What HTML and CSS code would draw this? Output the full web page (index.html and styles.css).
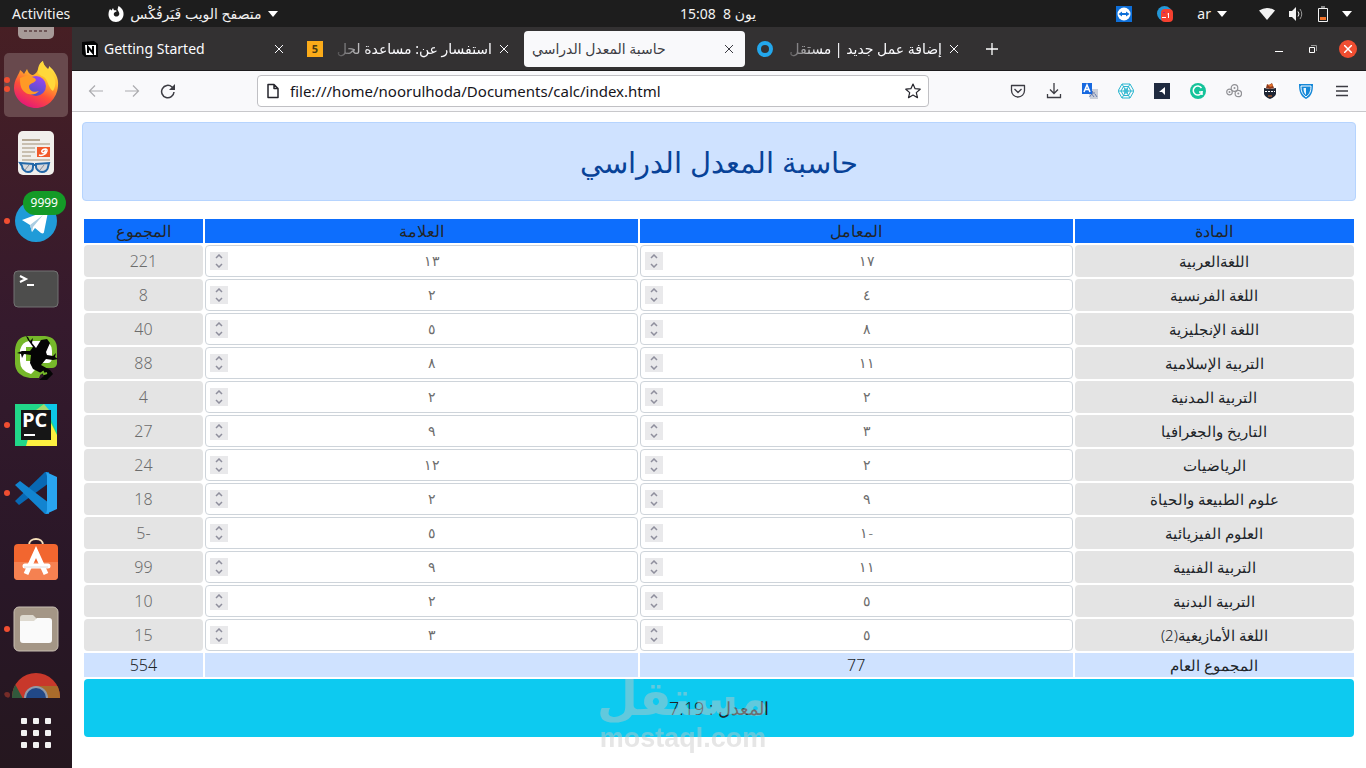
FILE: index.html
```html
<!DOCTYPE html>
<html lang="ar">
<head>
    <meta charset="UTF-8">
    <meta name="viewport" content="width=device-width, initial-scale=1.0">
    <title>حاسبة المعدل الدراسي</title>
    <link rel="stylesheet" href="styles.css">
</head>
<body>
    <!-- Top bar -->
    <header class="topbar">
        <div class="topbar-side">
            <button type="button" class="top-btn">Activities</button>
            <button type="button" class="top-btn app-menu">
                <svg width="16" height="16" viewBox="0 0 16 16"><path fill="#fff" fill-rule="evenodd" d="M2 3l1.500 1.500L5 2l1 2.300C8 4 9 5 9 5L6.500 6.500C5 8 6 10.500 8.200 10.500c2.500 0 3.700-2 2.800-4L9.500 3.500 10.500 0C14 2 16 5 15.500 9 15 13 12 16 8 16 3.500 16 .5 12.500.5 8.500.5 6.500 1 4.500 2 3z"/></svg>
                <span dir="rtl">متصفح الويب فَيَرفُكْس</span>
                <svg width="10" height="6" viewBox="0 0 10 6"><path fill="#fff" d="M0 0h10L5 6z"/></svg>
            </button>
        </div>
        <button type="button" class="top-btn clock" dir="ltr">15:08 &nbsp;8 يون</button>
        <div class="topbar-side tray">
            <svg width="16" height="16" viewBox="0 0 16 16"><path fill="#0e6fd8" d="M0 0h16v16H0z"/><circle cx="8" cy="8" r="6.500" fill="#fff"/><path fill="#0e6fd8" d="M2.500 8L6 5.500V7h4V5.500L13.500 8 10 10.500V9H6v1.500z"/></svg>
            <svg class="tray-telegram" width="16" height="16" viewBox="0 0 16 16"><circle cx="7.500" cy="7.500" r="7.500" fill="#2497d6"/><rect x="4" y="3" width="12" height="13" rx="4" fill="#f4402f"/><path stroke="#fff" d="M5 11.500h4M11.500 7v5M10.500 8h1"/><path fill="#b0208a" d="M6 6h2v1H6z"/></svg>
            <button type="button" class="top-btn lang">ar
                <svg width="10" height="6" viewBox="0 0 10 6"><path fill="#fff" d="M0 0h10L5 6z"/></svg>
            </button>
            <div class="status">
                <svg width="16" height="16" viewBox="0 0 16 16"><path fill="#f2f2f2" d="M0 4.500Q8-.5 16 4.500L8 14z"/></svg>
                <svg width="16" height="16" viewBox="0 0 16 16"><path fill="#f2f2f2" d="M1 5h3l4-4v14l-4-4H1z"/><path fill="none" stroke="#f2f2f2" d="M10 5.500q2 2.500 0 5"/><path fill="none" stroke="#999" d="M12 3q3.500 5 0 10"/></svg>
                <svg width="12" height="16" viewBox="0 0 12 16"><path fill="none" stroke="#f2f2f2" d="M1.500 2.500h9v13h-9zM4 1h4"/><path fill="#f37329" d="M3 11h6v3H3z"/></svg>
                <svg width="10" height="6" viewBox="0 0 10 6"><path fill="#fff" d="M0 0h10L5 6z"/></svg>
            </div>
        </div>
    </header>

    <div class="desktop">
        <!-- Dock -->
        <nav class="dock">
            <div class="dock-list">
                <div class="dock-item cut-top">
                    <svg width="44" height="44" viewBox="0 0 44 44"><rect x="4" y="1" width="36" height="42" rx="5" fill="#a79a98"/><path stroke="#6d5556" stroke-width="2" stroke-dasharray="3 2" d="M10 35h25"/></svg>
                </div>
                <div class="dock-item active running two">
                    <svg width="48" height="48" viewBox="0 0 48 48">
                        <defs>
                            <linearGradient id="fox" x1=".8" y1="0" x2=".3" y2="1"><stop offset="0" stop-color="#fff44f"/><stop offset=".35" stop-color="#ffb52a"/><stop offset=".65" stop-color="#ff5038"/><stop offset="1" stop-color="#e3157b"/></linearGradient>
                            <linearGradient id="globe" x1=".7" y1="0" x2=".3" y2="1"><stop offset="0" stop-color="#9e45f0"/><stop offset="1" stop-color="#4552c4"/></linearGradient>
                        </defs>
                        <path fill="url(#fox)" d="M5 16c1-3 3-5 3-7 2 1 3 3 4 4l3-5c1 3 2 5 5 6 2 0 5-2 6-6 1-5 3-7 5-8 0 3 2 5 5 8 1-1 1-2 1-3 6 5 10 12 9 20-1 13-11 22-22 22S2 38 2 27c0-4 1-8 3-11z"/>
                        <path fill="#ffd83a" d="M26 12c0-6 3-10 5-12 0 4 3 7 7 10 6 7 7 13 3 20-4-2-5-10-8-13-2-2-5-2-7-5z"/>
                        <circle cx="24" cy="25" r="10" fill="url(#globe)"/>
                        <path fill="#ff9a26" d="M8 17l8-3c3 2 7 2 8 5-1 3-6 3-7 6 0 5 5 7 10 5-5 6-15 4-18-4-1-3-1-6-1-9z"/>
                    </svg>
                </div>
                <div class="dock-item">
                    <svg width="48" height="48" viewBox="0 0 48 48"><rect x="6" y="2" width="36" height="44" rx="5" fill="#f1efec"/><path stroke="#b5a894" stroke-width="2" d="M10 11h18"/><path stroke="#c9bfb0" stroke-width="2" d="M10 15h28M10 19h13M10 23h13M10 27h9M10 31h28"/><rect x="25" y="18" width="13" height="10" fill="#f1592a"/><path fill="none" stroke="#fff" stroke-width="1.500" d="M27 26c2 1 7 0 8-4s-7-1-5 1 4-1 3-2"/><g fill="#d6d8dc" stroke="#2468a8" stroke-width="2"><path d="M8 34l13 1v3c0 3-2 5-5 5s-6-3-6-6zM24 35l13-1-1 4c0 3-3 5-6 5s-6-3-6-5z"/></g><path fill="none" stroke="#2468a8" stroke-width="2" d="M21 36h3"/><path stroke="#8b8f98" d="M13 41l4-5M28 41l4-5"/></svg>
                </div>
                <div class="dock-item running">
                    <svg width="48" height="48" viewBox="0 0 48 48"><circle cx="24" cy="24" r="21" fill="#209bd8"/><path fill="#fff" d="M10 23l24-9c2-1 2 0 2 1l-4 20c0 1-1 2-3 1l-6-5-3 4-2-7z"/><path fill="#a9cde2" d="M18 28l13-10-10 12-1 5z"/></svg>
                    <span class="badge">9999</span>
                </div>
                <div class="dock-item">
                    <svg width="48" height="48" viewBox="0 0 48 48"><rect x="2" y="6" width="44" height="36" rx="4" fill="#4d4d4c" stroke="#737373"/><path fill="none" stroke="#fff" stroke-width="2" d="M8 11l6 3-6 3M15 20h7"/></svg>
                </div>
                <div class="dock-item">
                    <svg width="48" height="48" viewBox="0 0 48 48"><path fill="#76b82a" d="M15 3h18q12 1 12 13v15q-1 4-5 4h-9l-4 10h-9Q4 43 3 31V17Q4 4 15 3z"/><path fill="#fff" d="M17 8h14q9 1 9 10v8q-1 4-4 4h-7l-7 8-3 3Q8 38 8 28V17q2-8 9-9z"/><path fill="#76b82a" d="M14 14h8v14h-8z"/><path fill="#050505" d="M14 3l2 1 2 4 3-3-1 5 4 5 5-8 6-1 3 4-4 9 1 3 6 1 3-3-1 4 3 2-5 1-7-1-5 6 9 5 3 4-6 6-8 0 5-4-3-3-8-4-3-6 1-8-7-1-2 4-1-4-4-1 5-2 8 0 3-4-5-7z"/><path stroke="#76b82a" stroke-width="2" d="M28 41l3-2 1 2 3-1"/></svg>
                </div>
                <div class="dock-item running">
                    <svg width="48" height="48" viewBox="0 0 48 48"><path fill="#21d789" d="M3 3h42v42H3z"/><path fill="#0cc8e8" d="M32 3h13v28z"/><path fill="#a5d96c" d="M32 3l5 6H24z"/><path fill="#fcf040" d="M39 22l6 12v11H14l2-7z"/><path fill="#161616" d="M9 9h30v30H9z"/><path fill="#fff" d="M12 33h11v2H12z"/><text class="pc-text" x="10" y="26">PC</text></svg>
                </div>
                <div class="dock-item running">
                    <svg width="48" height="48" viewBox="0 0 48 48"><path fill="#0868b3" d="M3 32l4 4L37 14V3l-4 0z"/><path fill="#1284d0" d="M3 16l5-4 29 22v11l-4 0z"/><path fill="#29a5f1" d="M34 3l11 5v32l-11 5 1-4V7z"/></svg>
                </div>
                <div class="dock-item">
                    <svg width="48" height="48" viewBox="0 0 48 48"><path fill="none" stroke="#f6dfb9" stroke-width="2" d="M17 11V8c0-8 14-8 14 0v3"/><rect x="2" y="7" width="44" height="36" rx="4" fill="#f2662f"/><path fill="#f58151" d="M2 25h44v14q0 4-4 4H6q-4 0-4-4z"/><path fill="none" stroke="#fff" stroke-width="5" d="M14 37l10-22 10 22"/><path stroke="#fff" stroke-width="5" stroke-linecap="round" d="M13 29h23"/><path stroke="#dedede" d="M12 30h24"/></svg>
                </div>
                <div class="dock-item running">
                    <svg width="48" height="48" viewBox="0 0 48 48"><rect x="2" y="2" width="44" height="44" rx="5" fill="#a49686" stroke="#c8beb2"/><path fill="#ded9cf" d="M8 13q0-3 3-3h10l4 4v6H8z"/><path fill="#fafafa" d="M8 16h14l3-3h12q3 0 3 3v19q0 3-3 3H11q-3 0-3-3z"/></svg>
                </div>
                <div class="dock-item running cut-bottom">
                    <svg width="48" height="48" viewBox="0 0 48 48">
                        <clipPath id="ring"><circle cx="24" cy="24" r="24"/></clipPath>
                        <g clip-path="url(#ring)"><path fill="#c8382b" d="M0 0h48v48H0z"/><path fill="#31593c" d="M3 11l13 24H0V14z"/><path fill="#a96b2b" d="M24 13h24v20H34z"/></g>
                        <circle cx="24" cy="25" r="12" fill="#929aa9"/><circle cx="24" cy="25" r="10" fill="#214887"/>
                    </svg>
                </div>
            </div>
            <button type="button" class="show-apps" aria-label="Show Applications">
                <i></i><i></i><i></i><i></i><i></i><i></i><i></i><i></i><i></i>
            </button>
        </nav>

        <!-- Browser window -->
        <div class="browser">
            <div class="tabs">
                <div class="tab">
                    <svg width="16" height="16" viewBox="0 0 16 16"><path fill="#050505" d="M0 1l12-1 4 3v13H3l-3-3z"/><path fill="#fff" d="M3 4h11v10H4z"/><path fill="none" stroke="#000" stroke-width="2" d="M6 12V6l5 6V5"/></svg>
                    <span class="tab-title">Getting Started</span>
                    <button type="button" class="tab-close" aria-label="Close tab"><svg width="8" height="8" viewBox="0 0 8 8"><path stroke="currentColor" d="M0 0l8 8M8 0L0 8"/></svg></button>
                </div>
                <div class="tab">
                    <span class="favicon-five">5</span>
                    <span class="tab-title fade" dir="rtl">استفسار عن: مساعدة لحل</span>
                    <button type="button" class="tab-close" aria-label="Close tab"><svg width="8" height="8" viewBox="0 0 8 8"><path stroke="currentColor" d="M0 0l8 8M8 0L0 8"/></svg></button>
                </div>
                <div class="tab selected">
                    <span class="tab-title">حاسبة المعدل الدراسي</span>
                    <button type="button" class="tab-close" aria-label="Close tab"><svg width="8" height="8" viewBox="0 0 8 8"><path stroke="currentColor" d="M0 0l8 8M8 0L0 8"/></svg></button>
                </div>
                <div class="tab">
                    <svg width="16" height="16" viewBox="0 0 16 16"><circle cx="8" cy="8" r="6" fill="none" stroke="#23a7ec" stroke-width="4"/></svg>
                    <span class="tab-title fade" dir="rtl">إضافة عمل جديد | مستقل</span>
                    <button type="button" class="tab-close" aria-label="Close tab"><svg width="8" height="8" viewBox="0 0 8 8"><path stroke="currentColor" d="M0 0l8 8M8 0L0 8"/></svg></button>
                </div>
                <button type="button" class="new-tab" aria-label="New tab"><svg width="12" height="12" viewBox="0 0 12 12"><path stroke="#fff" stroke-width="1.300" d="M6 0v12M0 6h12"/></svg></button>
                <div class="window-buttons">
                    <button type="button" aria-label="Minimize"><svg width="8" height="8" viewBox="0 0 8 8"><path fill="#fff" d="M0 6h8v1H0z"/></svg></button>
                    <button type="button" aria-label="Restore"><svg width="8" height="8" viewBox="0 0 8 8"><path fill="none" stroke="#fff" d="M.5 2.500h5v5h-5z"/><path fill="none" stroke="#999" d="M2 .5h5.500V6"/></svg></button>
                    <button type="button" class="close-window" aria-label="Close"><svg width="8" height="8" viewBox="0 0 8 8"><path stroke="#fff" stroke-width="1.500" d="M0 0l8 8M8 0L0 8"/></svg></button>
                </div>
            </div>

            <div class="toolbar">
                <div class="nav-buttons">
                    <button type="button" aria-label="Back"><svg width="16" height="16" viewBox="0 0 16 16"><path fill="none" stroke="#acacaf" stroke-width="1.200" d="M15 8H1M7 2.500L1.500 8 7 13.500"/></svg></button>
                    <button type="button" aria-label="Forward"><svg width="16" height="16" viewBox="0 0 16 16"><path fill="none" stroke="#acacaf" stroke-width="1.200" d="M1 8h14M9 2.500L14.500 8 9 13.500"/></svg></button>
                    <button type="button" aria-label="Reload"><svg width="16" height="16" viewBox="0 0 16 16"><path fill="none" stroke="#3c3c43" stroke-width="1.500" d="M14 9A6.200 6.200 0 1 1 12 4l2 2"/><path fill="#3c3c43" d="M15 1v6H9z"/></svg></button>
                </div>
                <div class="urlbar">
                    <svg width="16" height="16" viewBox="0 0 16 16"><path fill="none" stroke="#25252c" stroke-width="1.500" stroke-linejoin="round" d="M3 1.500h6l4 4v9H3zM9 1.500v4h4"/></svg>
                    <input type="text" aria-label="Address" dir="ltr" value="file:///home/noorulhoda/Documents/calc/index.html">
                    <svg width="16" height="16" viewBox="0 0 16 16"><path fill="none" stroke="#25252c" stroke-width="1.200" stroke-linejoin="round" d="M8 1l2.100 4.700 5.100.5-3.900 3.400 1.200 5.100L8 12l-4.500 2.700 1.200-5.100L.8 6.200l5.100-.5z"/></svg>
                </div>
                <div class="extensions">
                    <svg width="16" height="16" viewBox="0 0 16 16"><path fill="none" stroke="#3c3c43" stroke-width="1.300" stroke-linejoin="round" d="M1.500 2.500h13v5a6.500 6.500 0 0 1-13 0zM4.500 6L8 9.500 11.500 6"/></svg>
                    <svg width="16" height="16" viewBox="0 0 16 16"><path fill="none" stroke="#3c3c43" stroke-width="1.300" d="M8 0v10M4 6.500l4 4 4-4M1.500 11v3.500h13V11"/></svg>
                    <svg width="16" height="16" viewBox="0 0 16 16"><path fill="#c9ced8" d="M6 6h10v10H8z"/><path fill="none" stroke="#667baf" d="M8 10h5M10.500 8v2l-3 4M9 10l3 4M13 11l2 3"/><path fill="#1769e0" d="M0 0h10v11H0z"/><path fill="none" stroke="#fff" stroke-width="1.500" d="M2 9l3-7 3 7M3 6.500h4"/></svg>
                    <svg width="16" height="16" viewBox="0 0 16 16"><g fill="none" stroke="#2bb6cf"><path d="M4 1h8l4 7-4 7H4L0 8zM5.500 3.500h5L13 8l-2.500 4.500h-5L3 8zM7 6h2l1 2-1 2H7L6 8z"/><path d="M4 1l8 14M12 1L4 15M0 8h16"/></g></svg>
                    <svg width="16" height="16" viewBox="0 0 16 16"><path fill="#202b40" d="M0 0h16v16H0z"/><path fill="#fff" d="M11 4v8L8 9H5z"/></svg>
                    <svg width="16" height="16" viewBox="0 0 16 16"><circle cx="8" cy="8" r="8" fill="#15c39a"/><path fill="none" stroke="#fff" stroke-width="1.500" d="M11.500 5A4.500 4.500 0 1 0 12 9H9M12 8v4"/></svg>
                    <svg width="16" height="16" viewBox="0 0 16 16"><g fill="none" stroke="#929296" stroke-width="1.200"><circle cx="3.500" cy="9" r="2.800"/><circle cx="8.500" cy="5" r="3.300"/><circle cx="12.300" cy="10.500" r="3.200"/></g><g fill="#929296"><circle cx="3.500" cy="9" r="1"/><circle cx="8.500" cy="5" r="1"/><circle cx="12.300" cy="10.500" r="1"/></g></svg>
                    <svg width="16" height="16" viewBox="0 0 16 16"><path fill="#fff" d="M0 0h16v16H0z"/><path fill="#202735" d="M2 5l6 1 6-1v6q-1 3-6 5-5-2-6-5z"/><path fill="#8c3a1d" d="M4 5l1-4 2 1 3-2 2 5-4 1z"/><path fill="#e4722b" d="M6 2l4-1 1 2-3 1z"/><path stroke="#fff" stroke-dasharray="2 1" d="M3 8.500h10"/><path stroke="#e4722b" d="M6 13h4"/></svg>
                    <svg width="16" height="16" viewBox="0 0 16 16"><path fill="#1588d8" d="M1 1h14c0 7-1 12-7 15C2 13 1 8 1 1z"/><path fill="none" stroke="#fff" d="M3 3h10c0 5-1 8-5 11-4-3-5-6-5-11z"/><path fill="#e6f5ff" d="M5.500 5H8v7C6 10 5.500 8 5.500 5z"/></svg>
                    <svg width="16" height="16" viewBox="0 0 16 16"><path stroke="#3c3c43" stroke-width="1.300" d="M2 3.500h12M2 8h12M2 12.500h12"/></svg>
                </div>
            </div>

            <!-- Calculator page -->
            <main class="page" dir="rtl">
                <h1 class="title">حاسبة المعدل الدراسي</h1>
                <table class="marks">
                    <colgroup>
                        <col>
                        <col class="col-value">
                        <col class="col-value">
                        <col class="col-sum">
                    </colgroup>
                    <thead>
                        <tr>
                            <th>المادة</th>
                            <th>المعامل</th>
                            <th>العلامة</th>
                            <th>المجموع</th>
                        </tr>
                    </thead>
                    <tbody id="subjects"></tbody>
                    <tfoot>
                        <tr class="totals">
                            <td class="total-name">المجموع العام</td>
                            <td>77</td>
                            <td></td>
                            <td>554</td>
                        </tr>
                        <tr>
                            <td class="average" colspan="4">المعدل : 7.19</td>
                        </tr>
                    </tfoot>
                </table>
                <div class="watermark" dir="ltr">
                    <span class="watermark-ar">مستقل</span>
                    <span class="watermark-en">mostaql.com</span>
                </div>
            </main>
        </div>
    </div>
    <script src="script.js"></script>
</body>
</html>
```
FILE: styles.css
```css
* {
    box-sizing: border-box;
}

body {
    margin: 0;
    min-height: 100vh;
    display: flex;
    flex-direction: column;
    font-family: "Noto Sans", "DejaVu Sans", sans-serif;
    font-size: 14px;
    background-color: #fff;
}

button {
    padding: 0;
    border: none;
    background: none;
    color: inherit;
    font: inherit;
    cursor: pointer;
}

svg {
    display: block;
    flex-shrink: 0;
}

/* Top bar */
.topbar {
    display: grid;
    grid-template-columns: 1fr auto 1fr;
    align-items: center;
    height: 27px;
    padding: 0 14px 0 12px;
    background-color: #1d1d1d;
    color: #f2f2f2;
}

.topbar-side {
    display: flex;
    align-items: center;
}

.top-btn {
    display: flex;
    align-items: center;
    gap: 6px;
    line-height: 20px;
}

.app-menu {
    margin-left: 38px;
}

/* centred over the browser window, not over the dock */
.clock {
    padding-left: 72px;
}

.tray {
    justify-content: flex-end;
}

.tray-telegram {
    margin-left: 25px;
}

.lang {
    margin-left: 24px;
}

.status {
    display: flex;
    align-items: center;
    gap: 13px;
    margin-left: 32px;
}

.desktop {
    flex: 1;
    display: flex;
}

/* Dock */
.dock {
    width: 72px;
    flex-shrink: 0;
    display: flex;
    flex-direction: column;
    background: linear-gradient(#471f24, #351a2d 40%, #291727 75%, #25171f);
}

.dock-list {
    display: flex;
    flex-direction: column;
    gap: 4px;
}

.dock-item {
    position: relative;
    display: flex;
    align-items: center;
    justify-content: center;
    height: 64px;
    margin: 0 4px;
    border-radius: 5px;
}

.dock-item.active {
    background-color: #68494d;
}

.dock-item.cut-top {
    height: 22px;
    align-items: flex-end;
    padding-bottom: 9px;
    overflow: hidden;
}

.dock-item.cut-bottom {
    height: 33px;
    align-items: flex-start;
    padding-top: 8px;
    overflow: hidden;
}

.running::before {
    content: "";
    position: absolute;
    left: 0;
    top: 50%;
    width: 6px;
    height: 6px;
    margin-top: -3px;
    border-radius: 50%;
    background-color: #f04e31;
}

.running.two::before {
    margin-top: -8px;
    box-shadow: 0 9px #f04e31;
}

.cut-bottom::before {
    top: 30px;
    opacity: 0.4;
}

.badge {
    position: absolute;
    right: 2px;
    top: 2px;
    padding: 0 8px;
    border-radius: 12px;
    background-color: #149a27;
    color: #fff;
    font-size: 12px;
    line-height: 24px;
}

.pc-text {
    font: bold 20px "Open Sans", sans-serif;
    fill: #fff;
}

.show-apps {
    display: grid;
    grid-template-columns: repeat(3, 6px);
    gap: 6px;
    margin: 20px auto;
}

.show-apps i {
    height: 6px;
    border-radius: 1px;
    background-color: #f2f2f2;
}

/* Tabs */
.browser {
    flex: 1;
    min-width: 0;
    display: flex;
    flex-direction: column;
}

.tabs {
    display: flex;
    align-items: center;
    gap: 4px;
    height: 44px;
    padding: 0 9px 0 2px;
    border-bottom: 1px solid #1d1c1d;
    background-color: #333132;
    color: #fbfbfe;
}

.tab {
    flex: 0 1 221px;
    min-width: 0;
    display: flex;
    align-items: center;
    height: 36px;
    padding: 0 12px 0 8px;
    border-radius: 4px;
}

.tab.selected {
    background-color: #f9f9fb;
    color: #3c3c43;
}

.tab-title {
    flex: 1;
    min-width: 0;
    overflow: hidden;
    white-space: nowrap;
}

.tab svg + .tab-title {
    margin-left: 6px;
}

.tab .tab-title.fade {
    margin: 0 8px;
    mask-image: linear-gradient(to right, transparent, #000 40px);
}

.favicon-five {
    width: 16px;
    background-color: #fbab19;
    color: #4a3a12;
    font-size: 11px;
    font-weight: bold;
    line-height: 16px;
    text-align: center;
}

.new-tab {
    margin-left: 12px;
}

.window-buttons {
    display: flex;
    align-items: center;
    gap: 26px;
    margin-left: auto;
}

.close-window {
    display: flex;
    align-items: center;
    justify-content: center;
    width: 18px;
    height: 18px;
    margin-left: -4px;
    border-radius: 50%;
    background-color: #f04e31;
}

/* Toolbar */
.toolbar {
    display: flex;
    align-items: center;
    height: 41px;
    padding: 0 16px;
    border-bottom: 1px solid #c8c8cb;
    background-color: #f9f9fb;
}

.nav-buttons {
    display: flex;
    gap: 20px;
}

.urlbar {
    flex: 0 1 672px;
    display: flex;
    align-items: center;
    gap: 9px;
    height: 32px;
    margin-left: 81px;
    padding: 0 7px;
    border: 1px solid #c0c0c4;
    border-radius: 4px;
    background-color: #fff;
}

.urlbar input {
    flex: 1;
    min-width: 0;
    padding: 0;
    border: none;
    outline: none;
    background: none;
    color: #15141a;
    font: inherit;
    font-size: 15px;
}

.extensions {
    display: flex;
    gap: 20px;
    margin-left: auto;
}

/* Calculator */
.page {
    position: relative;
    flex: 1;
    padding: 10px;
    font-weight: 300;
    font-size: 16px;
}

.title {
    margin: 0 0 16px;
    padding: 16px;
    border: 1px solid #b6d4fe;
    border-radius: 4px;
    background-color: #cfe2ff;
    color: #084298;
    font-size: 29px;
    font-weight: 300;
    line-height: 45px;
    text-align: center;
}

.marks {
    width: 100%;
    table-layout: fixed;
    border-collapse: separate;
    border-spacing: 2px;
    color: #212529;
    line-height: 24px;
    text-align: center;
}

.col-value {
    width: 34.25%;
}

.col-sum {
    width: 9.4%;
}

.marks th,
.marks td {
    padding: 0;
}

.marks th {
    background-color: #0d6efd;
    font-weight: 300;
}

.marks .name,
.marks .sum {
    height: 32px;
    border-radius: 4px;
    background-color: #e4e4e4;
}

.marks .name,
.marks .total-name {
    font-size: 15px;
}

.marks .sum {
    color: #6c6c6c;
}

.number {
    display: flex;
    align-items: center;
    height: 32px;
    padding: 0 1px 0 4px;
    border: 1px solid #ced4da;
    border-radius: 4px;
    background-color: #fff;
}

.number input {
    flex: 1;
    min-width: 0;
    padding: 0;
    border: none;
    outline: none;
    background: none;
    color: #6c6c6c;
    font: inherit;
    font-size: 14px;
    text-align: center;
}

.spinner {
    display: flex;
    flex-direction: column;
    background-color: #e9e9eb;
}

.spinner button {
    display: flex;
    align-items: center;
    justify-content: center;
    width: 18px;
    height: 9px;
}

.totals td {
    background-color: #cfe2ff;
}

.marks .average {
    height: 58px;
    border-radius: 4px;
    background-color: #0dcaf0;
    font-size: 18px;
}

/* Watermark over the bottom of the page */
.watermark {
    position: absolute;
    left: 0;
    right: 0;
    bottom: 16px;
    display: flex;
    flex-direction: column;
    align-items: center;
    padding-right: 72px;
    color: #c8c8c8;
    font-weight: bold;
    opacity: 0.45;
    pointer-events: none;
}

.watermark-ar {
    font-family: "DejaVu Sans", sans-serif;
    font-size: 47px;
    line-height: 50px;
}

.watermark-en {
    font-family: "Liberation Sans", sans-serif;
    font-size: 27px;
    line-height: 28px;
}
```
FILE: script.js
```js
const subjects = [
    ['اللغةالعربية', '١٧', '١٣', '221'],
    ['اللغة الفرنسية', '٤', '٢', '8'],
    ['اللغة الإنجليزية', '٨', '٥', '40'],
    ['التربية الإسلامية', '١١', '٨', '88'],
    ['التربية المدنية', '٢', '٢', '4'],
    ['التاريخ والجغرافيا', '٣', '٩', '27'],
    ['الرياضيات', '٢', '١٢', '24'],
    ['علوم الطبيعة والحياة', '٩', '٢', '18'],
    ['العلوم الفيزيائية', '-١', '٥', '-5'],
    ['التربية الفنيية', '١١', '٩', '99'],
    ['التربية البدنية', '٥', '٢', '10'],
    ['اللغة الأمازيغية(2)', '٥', '٣', '15']
];

function numberBox(label, value) {
    return `
        <div class="number">
            <input type="text" inputmode="numeric" aria-label="${label}" value="${value}">
            <div class="spinner">
                <button type="button" aria-label="+"><svg width="8" height="5" viewBox="0 0 8 5"><path fill="none" stroke="#8f8f9d" stroke-width="1.500" d="M1 4l3-3 3 3"/></svg></button>
                <button type="button" aria-label="-"><svg width="8" height="5" viewBox="0 0 8 5"><path fill="none" stroke="#8f8f9d" stroke-width="1.500" d="M1 1l3 3 3-3"/></svg></button>
            </div>
        </div>`;
}

document.getElementById('subjects').innerHTML = subjects.map(([name, factor, mark, sum]) => `
    <tr>
        <td class="name">${name}</td>
        <td>${numberBox('المعامل ' + name, factor)}</td>
        <td>${numberBox('العلامة ' + name, mark)}</td>
        <td class="sum">${sum}</td>
    </tr>`).join('');
```
